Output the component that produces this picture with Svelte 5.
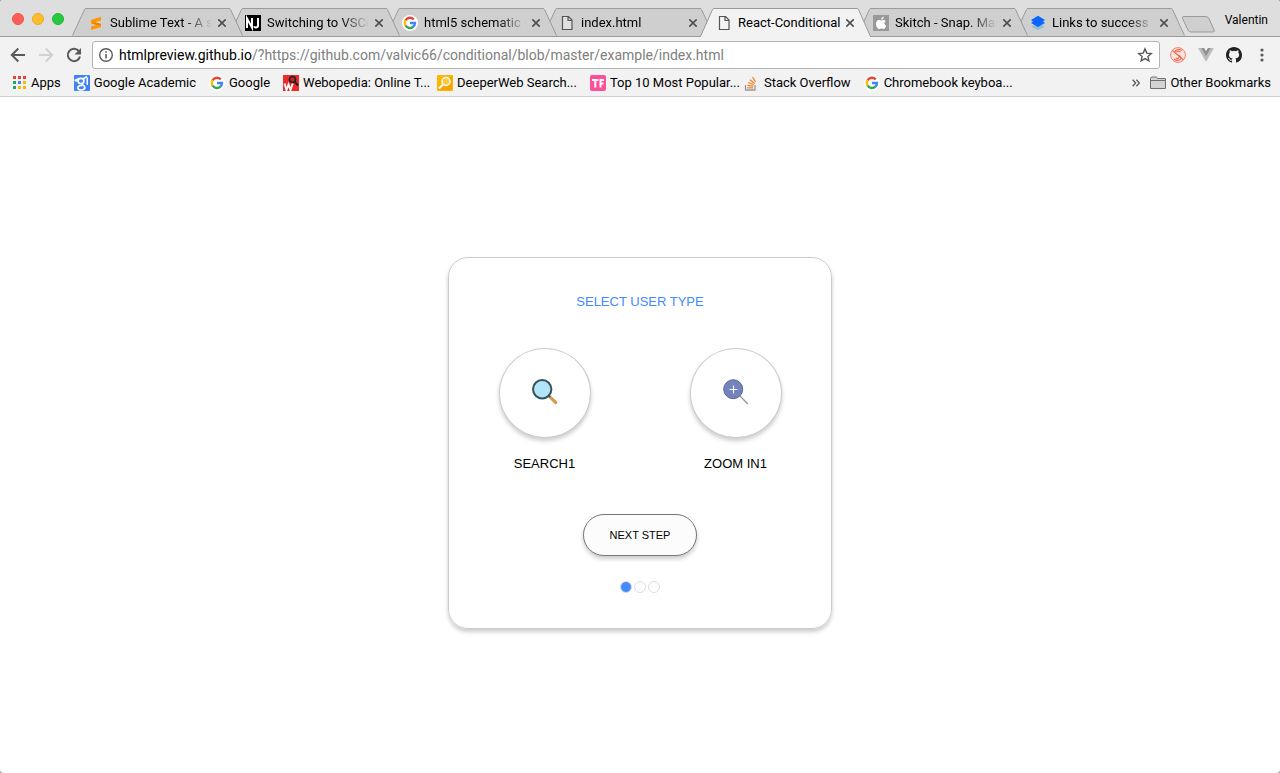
<script>
  const tabs = [
    { title: 'Sublime Text - A sophisticated text editor', icon: 'sublime' },
    { title: 'Switching to VSCode', icon: 'nj' },
    { title: 'html5 schematic - Google Search', icon: 'google' },
    { title: 'index.html', icon: 'page' },
    { title: 'React-Conditional', icon: 'page', active: true },
    { title: 'Skitch - Snap. Mark up. Share', icon: 'apple' },
    { title: 'Links to success – Dropbox Paper', icon: 'layers' }
  ];

  const bookmarks = [
    { title: 'Apps', icon: 'apps' },
    { title: 'Google Academic', icon: 'scholar' },
    { title: 'Google', icon: 'google' },
    { title: 'Webopedia: Online T...', icon: 'webopedia' },
    { title: 'DeeperWeb Search...', icon: 'deeper' },
    { title: 'Top 10 Most Popular...', icon: 'tf' },
    { title: 'Stack Overflow', icon: 'stack' },
    { title: 'Chromebook keyboa...', icon: 'google' }
  ];

  const steps = [1, 2, 3];
  let current = $state(1);
</script>

{#snippet icon(name)}
  <svg class="icon" width="16" height="16" viewBox="0 0 16 16" aria-hidden="true">
    {#if name === 'sublime'}
      <path d="M3 4.900 13 1.800v3.600L7.200 7.200 13 9v3.300L3 15v-3.400l5.600-1.700L3 8.300z" fill="#ff9800" />
      <path d="M3 8.300 7.200 7.200 13 9v1L8.600 9.900z" fill="#e98500" />
    {:else if name === 'nj'}
      <rect width="16" height="16" fill="#000" />
      <path d="M2 13V3.500L7 12.500V3M13 3v7.500q0 2-2 2-1.500 0-2-1.200" fill="none" stroke="#fff" stroke-width="2" />
    {:else if name === 'google'}
      <circle cx="8" cy="8" r="8" fill="#fff" />
      <g fill="none" stroke-width="2.400">
        <path d="M3.600 5.300A5 5 0 0 1 11.700 4.500" stroke="#ea4335" />
        <path d="M3.700 10.600A5 5 0 0 1 3.600 5.200" stroke="#fbbc05" />
        <path d="M11.400 11.700A5 5 0 0 1 3.600 10.500" stroke="#34a853" />
        <path d="M8 8h5a5 5 0 0 1-1.700 3.700" stroke="#4285f4" />
      </g>
    {:else if name === 'page'}
      <path d="M3.500 1.500h6l3.500 3.500v9.500h-9.500zM9 1.500v4h4" fill="#fafafa" fill-opacity=".4" stroke="#555" stroke-width="1.200" />
    {:else if name === 'apple'}
      <rect width="16" height="16" fill="#999" />
      <path d="M8.200 4.700c.1-1.700 1-2.700 2.500-3 .1 1.700-.9 2.900-2.500 3zM8.200 5.500c.8 0 1.400-.6 2.500-.6.9 0 1.600.5 2.100 1.200-2 1.200-1.600 3.800.4 4.600-.5 1.500-1.600 3.300-2.700 3.300-.9 0-1.200-.5-2.200-.5s-1.400.5-2.200.5C4.500 14 3 11.300 3 8.800 3 6.300 4.400 4.900 6 4.900c.9 0 1.500.6 2.200.6z" fill="#fff" />
    {:else if name === 'layers'}
      <path d="m1 11.500 7-3 7 3-7 3.700z" fill="#93bdd9" />
      <path d="m1 5 7-4.200L15 5l-2 1.500L15 8l-7 4-7-4 2-1.500z" fill="#0b65ff" />
    {:else if name === 'apps'}
      <g fill="#ea4335"><rect x="2" y="1" width="3" height="3" /><rect x="7" y="1" width="3" height="3" /><rect x="12" y="1" width="3" height="3" /></g>
      <rect x="2" y="6" width="3" height="3" fill="#1fa463" /><rect x="7" y="6" width="3" height="3" fill="#4285f4" /><rect x="12" y="6" width="3" height="3" fill="#fbb705" />
      <rect x="2" y="11" width="3" height="3" fill="#1fa463" /><rect x="7" y="11" width="3" height="3" fill="#fbb705" /><rect x="12" y="11" width="3" height="3" fill="#fbb705" />
    {:else if name === 'scholar'}
      <rect width="16" height="16" rx="1" fill="#3f83f8" />
      <g fill="none" stroke="#fff" stroke-width="1.700"><ellipse cx="7" cy="6" rx="2.900" ry="2.600" /><path d="M9 4 13 1.500M8.500 8.500c-1.500 1.500 2.300 1.500 2.300 4 0 3.300-7 3.300-7 .3C3.800 10.500 7 10.300 8.500 10.500" /></g>
      <path d="M0 5 5 2.500v2.200L2 7zM12.500 2.500H14V10h-1.500z" fill="#fff" />
    {:else if name === 'webopedia'}
      <rect width="16" height="16" fill="#ed2b2b" />
      <circle cx="9.500" cy="4.500" r="3" fill="#d42020" stroke="#222" stroke-width="1.700" />
      <path d="m11.500 6.500 3.500 4" stroke="#222" stroke-width="2.200" />
      <path d="m1.500 8.500 2 6.500 2-5.500 2 5.500 2.200-6.500" fill="none" stroke="#fff" stroke-width="1.900" />
    {:else if name === 'deeper'}
      <rect width="16" height="16" rx="1" fill="#ffb400" /><path d="M1 15 15 1v14z" fill="#f7a300" />
      <circle cx="9" cy="6.500" r="4" fill="#ffc83d" stroke="#fff" stroke-width="1.500" /><path d="m6 9.500-4 4" stroke="#fff" stroke-width="2" />
    {:else if name === 'tf'}
      <rect width="16" height="16" rx="2" fill="#ff4f9a" />
      <path d="M2 5h6.500M5.300 4v8.500M10.500 12.500V5H14M10.500 8.500h3" fill="none" stroke="#fff" stroke-width="2" />
    {:else if name === 'stack'}
      <path d="M1.500 10v5h9.500v-5" fill="none" stroke="#999" stroke-width="1.300" />
      <path d="M3.200 12.800h6M3.400 10.300l6 .8M4.100 7.500l5.600 2M5.900 4.800l4.700 3.600M8.600 2l3 5" fill="none" stroke="#f48024" stroke-width="1.300" />
    {:else if name === 'folder'}
      <path d="M.5 3.500 1.500 2h5l1 1.500h8v10H.5zM.5 5.500h15" fill="#d3d3d3" stroke="#707070" />
    {/if}
  </svg>
{/snippet}

<div class="window">
  <header>
    <div class="titlebar">
      <div class="lights">
        <button class="red" aria-label="Close window"></button>
        <button class="yellow" aria-label="Minimize window"></button>
        <button class="green" aria-label="Zoom window"></button>
      </div>
      <div class="tabs">
        {#each tabs as tab, i}
          <div class="tab" class:active={tab.active} style:z-index={tab.active ? 20 : 10 - i}>
            <svg class="shape" viewBox="0 0 171 29" preserveAspectRatio="none" aria-hidden="true">
              <path class="fill" d="M.5 29 12.500 1.500q.5-1 1.500-1h143q1 0 1.500 1L170.500 29z" />
              <path class="line" d="M.5 28.500 12.500 1.500q.5-1 1.500-1h143q1 0 1.500 1L170.500 28.500" />
            </svg>
            {@render icon(tab.icon)}
            <span class="title">{tab.title}</span>
            <button class="close" aria-label="Close tab">
              <svg width="8" height="8" viewBox="0 0 8 8"><path d="m.3.300 7.400 7.400m0-7.400L.3 7.700" stroke="#4f4f4f" stroke-width="1.600" /></svg>
            </button>
          </div>
        {/each}
        <button class="new" aria-label="New tab">
          <svg width="34" height="17" viewBox="0 0 34 17"><path d="M3 .5h22q2 0 3 2l5 11.500q1 2-1 2H10q-2 0-3-2L1.500 2.500q-.8-2 1.500-2z" fill="#cfcfcf" stroke="#999" /></svg>
        </button>
      </div>
      <button class="profile">Valentin</button>
    </div>

    <div class="toolbar">
      <button class="tool" aria-label="Back"><svg width="16" height="16" viewBox="0 0 16 16"><path d="M15 8H2M8.300 1.500 1.800 8l6.500 6.500" fill="none" stroke="#5a5a5a" stroke-width="2" /></svg></button>
      <button class="tool" aria-label="Forward" disabled><svg width="16" height="16" viewBox="0 0 16 16"><path d="M1 8h13M7.700 1.500 14.200 8l-6.500 6.500" fill="none" stroke="#d2d2d2" stroke-width="2" /></svg></button>
      <button class="tool" aria-label="Reload"><svg width="16" height="16" viewBox="0 0 16 16"><path d="M14 9.500A6.200 6.200 0 1 1 12.800 4" fill="none" stroke="#5a5a5a" stroke-width="2" /><path d="M15 1v6.500H8.500z" fill="#5a5a5a" /></svg></button>
      <div class="omnibox">
        <svg width="16" height="16" viewBox="0 0 16 16" aria-hidden="true"><circle cx="8" cy="8" r="6.300" fill="none" stroke="#5a5a5a" stroke-width="1.400" /><path d="M8 7v4.500M8 4.200v1.600" stroke="#5a5a5a" stroke-width="1.600" /></svg>
        <a class="url" href="#top"><b>htmlpreview.github.io</b>/?https://github.com/valvic66/conditional/blob/master/example/index.html</a>
        <button class="star" aria-label="Bookmark this page"><svg width="16" height="16" viewBox="0 0 16 16"><path d="m8 1.900 1.800 4.200 4.500.4-3.400 3 1 4.400L8 11.600l-3.900 2.300 1-4.400-3.400-3 4.500-.4z" fill="none" stroke="#5a5a5a" stroke-width="1.400" /></svg></button>
      </div>
      <div class="extensions">
        <button class="tool" aria-label="Skitch extension"><svg width="16" height="16" viewBox="0 0 16 16"><circle cx="8" cy="8" r="7.400" fill="#fbe3de" stroke="#f4806a" /><path d="M12 3.500C9 1.500 4.500 3 5 5.500S11.500 8 11 11s-5 3-7 1M2.500 3.500l11 9.500M10.500 5C8.500 3.700 6.500 4 6.800 5.400M9 9.500c.5 1.800-1.500 2.500-3 1.800" fill="none" stroke="#f4694f" stroke-width="1.100" /></svg></button>
        <button class="tool" aria-label="Vue extension"><svg width="16" height="16" viewBox="0 0 16 16"><path d="M0 1h6l2 3.500L10 1h6L8 15z" fill="#bdbdbd" /><path d="M3.300 1H6l2 3.500L10 1h2.700L8 9.200z" fill="#8f8f8f" /></svg></button>
        <button class="tool" aria-label="GitHub extension"><svg width="16" height="16" viewBox="0 0 16 16"><path fill="#222" d="M8 0C3.580 0 0 3.580 0 8c0 3.540 2.290 6.530 5.470 7.590.4.070.55-.17.55-.38v-1.490c-2.010.37-2.530-.49-2.690-.94-.09-.23-.48-.94-.82-1.130-.28-.15-.68-.52-.01-.53.63-.01 1.080.58 1.230.82.72 1.210 1.870.87 2.330.66.07-.52.28-.87.51-1.070-1.780-.2-3.640-.89-3.640-3.950 0-.87.31-1.590.82-2.150-.08-.2-.36-1.020.08-2.120 0 0 .67-.21 2.200.82a7.600 7.600 0 0 1 4 0c1.530-1.040 2.200-.82 2.200-.82.44 1.100.16 1.920.08 2.120.51.56.82 1.270.82 2.150 0 3.070-1.870 3.750-3.650 3.950.29.25.54.73.54 1.480v2.200c0 .21.150.46.55.38A8 8 0 0 0 16 8c0-4.420-3.580-8-8-8z" /></svg></button>
        <button class="tool" aria-label="Menu"><svg width="16" height="16" viewBox="0 0 16 16" fill="#5a5a5a"><circle cx="8" cy="3" r="1.600" /><circle cx="8" cy="8" r="1.600" /><circle cx="8" cy="13" r="1.600" /></svg></button>
      </div>
    </div>

    <nav class="bookmarks" aria-label="Bookmarks">
      {#each bookmarks as mark}
        <a class="mark" href="#top">{@render icon(mark.icon)}<span>{mark.title}</span></a>
      {/each}
      <button class="more" aria-label="More bookmarks"><svg width="8" height="8" viewBox="0 0 8 8"><path d="m.7.800 3 3.200-3 3.200M4.400.800l3 3.200-3 3.200" fill="none" stroke="#5a5a5a" stroke-width="1.300" /></svg></button>
      <a href="#top">{@render icon('folder')}<span>Other Bookmarks</span></a>
    </nav>
  </header>

  <main>
    <section class="card">
      <h1>SELECT USER TYPE</h1>
      <div class="choices">
        <div class="choice">
          <button class="round" aria-labelledby="search-label">
            <svg width="26" height="26" viewBox="0 0 26 26"><path d="m16 18 2-2 7 6.500q.6 1.300-.2 2.200-1 .8-2 .3z" fill="#d39b4b" /><path d="m16 16 2 2" stroke="#37525f" stroke-width="2" /><circle cx="10.200" cy="10.200" r="9.200" fill="#b3e5f8" stroke="#37525f" stroke-width="2" /></svg>
          </button>
          <span id="search-label">SEARCH1</span>
        </div>
        <div class="choice">
          <button class="round" aria-labelledby="zoom-label">
            <svg width="26" height="26" viewBox="0 0 26 26"><path d="m17 17 7.800 8" stroke="#8696a6" stroke-width="1.200" /><circle cx="10.200" cy="10.200" r="9.500" fill="#7383bf" stroke="#556080" stroke-width=".9" /><path d="M10.500 6.500v8M6.500 10.500h8" stroke="#fff" stroke-width="1.100" /></svg>
          </button>
          <span id="zoom-label">ZOOM IN1</span>
        </div>
      </div>
      <button class="next" onclick={() => (current = (current % 3) + 1)}>NEXT STEP</button>
      <div class="dots">
        {#each steps as step}
          <span class="dot" class:on={step === current}></span>
        {/each}
      </div>
    </section>
  </main>
</div>

<style>
  :global(body) { background: #aaa; }
  button { margin: 0; padding: 0; border: 0; background: none; font: inherit; color: inherit; cursor: pointer; }
  a { color: inherit; text-decoration: none; }
  svg { display: block; flex: none; }

  .window {
    min-height: 100vh;
    display: flex;
    flex-direction: column;
    background: #fff;
    border-radius: 4px;
    overflow: hidden;
  }
  header { background: #f2f2f2; border-bottom: 1px solid #cfcfcf; font: 13px/16px Roboto, sans-serif; color: #000; }

  .titlebar { display: flex; height: 36px; background: #dedede; border-bottom: 1px solid #999; }
  .lights { display: flex; gap: 8px; padding: 13px 8px 0 12px; }
  .lights button { width: 12px; height: 12px; border-radius: 50%; border: 1px solid; box-sizing: border-box; }
  .lights .red { background: #ff5f57; border-color: #f0524b; }
  .lights .yellow { background: #ffbd2e; border-color: #eaaa22; }
  .lights .green { background: #28c940; border-color: #1cb834; }

  .tabs { flex: 1; min-width: 0; display: flex; padding-top: 8px; isolation: isolate; }
  .tab {
    position: relative;
    flex: 0 1 171px;
    min-width: 0;
    height: 29px;
    margin-right: -14px;
    padding: 0 17px 0 16px;
    box-sizing: border-box;
    display: flex;
    align-items: center;
    gap: 6px;
    isolation: isolate;
  }
  .shape { position: absolute; inset: 0; width: 100%; height: 100%; z-index: -1; }
  .fill { fill: #cfcfcf; }
  .line { fill: none; stroke: #999; }
  .tab:not(.active) .shape { border-bottom: 1px solid #999; box-sizing: border-box; }
  .active .fill { fill: #f2f2f2; }
  .title {
    flex: 1;
    min-width: 0;
    overflow: hidden;
    white-space: nowrap;
    mask-image: linear-gradient(to right, #000 calc(100% - 28px), transparent);
  }
  .active .title { mask-image: none; }
  .close { flex: none; width: 8px; }
  .new { align-self: flex-start; margin: 8px 0 0 10px; }
  .profile { align-self: flex-start; padding: 12px 12px 0 0; font-size: 12px; }

  .toolbar { display: flex; align-items: center; padding: 4px 10px 0; gap: 12px; }
  .tool { flex: none; width: 16px; }
  .omnibox {
    flex: 1;
    min-width: 0;
    height: 28px;
    box-sizing: border-box;
    margin-right: -2px;
    margin-left: -2px;
    padding: 0 6px 0 5px;
    display: flex;
    align-items: center;
    gap: 5px;
    background: #fff;
    border: 1px solid #b4b4b4;
    border-radius: 3px;
  }
  .url { flex: 1; min-width: 0; overflow: hidden; white-space: nowrap; font-size: 14px; line-height: 20px; color: #808080; }
  .url b { font-weight: 400; color: #000; }
  .extensions { display: flex; gap: 12px; }

  .bookmarks { display: flex; align-items: center; height: 27px; padding: 0 9px 0 11px; white-space: nowrap; }
  .bookmarks a { display: flex; align-items: center; gap: 4px; }
  .bookmarks .mark { box-sizing: border-box; max-width: 154px; padding-right: 13px; }
  .more { margin-left: auto; margin-right: 10px; }

  main { flex: 1; font-family: "Liberation Sans", Arial, sans-serif; color: #000; }
  .card {
    width: 30%;
    min-width: 300px;
    margin: 160px auto 40px;
    padding: 36px 0 35px;
    box-sizing: border-box;
    display: flex;
    flex-direction: column;
    align-items: center;
    border: 1px solid #ccc;
    border-radius: 20px;
    box-shadow: 0 3px 4px rgba(0, 0, 0, 0.2);
  }
  h1 { margin: 0; font-size: 13px; line-height: 16px; font-weight: 400; color: #448aff; }
  .choices { display: grid; grid-template-columns: 1fr 1fr; width: 100%; margin-top: 38px; }
  .choice { display: flex; flex-direction: column; align-items: center; gap: 18px; font-size: 13px; line-height: 16px; }
  .round {
    width: 92px;
    height: 90px;
    padding-bottom: 2px;
    box-sizing: border-box;
    display: flex;
    align-items: center;
    justify-content: center;
    border: 1px solid #ccc;
    border-radius: 50%;
    background: #fff;
    box-shadow: 0 3px 4px rgba(0, 0, 0, 0.2);
  }
  .next {
    margin-top: 42px;
    padding: 0 26px;
    height: 42px;
    border: 1px solid #777;
    border-radius: 21px;
    background: #fcfcfc;
    font-size: 11px;
    box-shadow: 0 3px 4px rgba(0, 0, 0, 0.2);
  }
  .dots { display: flex; gap: 2px; margin-top: 25px; }
  .dot { width: 12px; height: 12px; box-sizing: border-box; border: 1px solid #ddd; border-radius: 50%; }
  .dot.on { background: #448aff; }
</style>
